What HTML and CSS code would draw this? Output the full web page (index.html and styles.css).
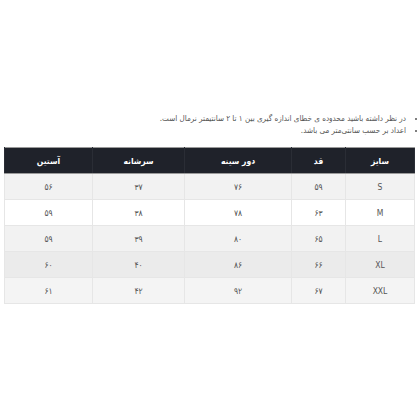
FILE: index.html
```html
<!DOCTYPE html>
<html lang="fa" dir="rtl">
<head>
<meta charset="utf-8">
<link rel="stylesheet" href="styles.css">
</head>
<body>
<div class="page">
  <ul class="notes">
    <li>در نظر داشته باشید محدوده ی خطای اندازه گیری بین ۱ تا ۲ سانتیمتر نرمال است.</li>
    <li>اعداد بر حسب سانتی‌متر می باشد.</li>
  </ul>
  <table class="sizes">
    <colgroup>
      <col class="c1"><col class="c2"><col class="c3"><col class="c4"><col class="c5">
    </colgroup>
    <thead>
      <tr><th>سایز</th><th>قد</th><th>دور سینه</th><th>سرشانه</th><th>آستین</th></tr>
    </thead>
    <tbody>
      <tr class="r1"><td>S</td><td>۵۹</td><td>۷۶</td><td>۳۷</td><td>۵۶</td></tr>
      <tr class="r2"><td>M</td><td>۶۳</td><td>۷۸</td><td>۳۸</td><td>۵۹</td></tr>
      <tr class="r3"><td>L</td><td>۶۵</td><td>۸۰</td><td>۳۹</td><td>۵۹</td></tr>
      <tr class="r4"><td>XL</td><td>۶۶</td><td>۸۶</td><td>۴۰</td><td>۶۰</td></tr>
      <tr class="r5"><td>XXL</td><td>۶۷</td><td>۹۲</td><td>۴۲</td><td>۶۱</td></tr>
    </tbody>
  </table>
</div>
</body>
</html>
```
FILE: styles.css
```css
html, body {
  margin: 0;
  padding: 0;
  background: #ffffff;
}
.page {
  padding: 113px 5px 0 5px;
  font-family: "DejaVu Sans Condensed", "DejaVu Sans", sans-serif;
  color: #555555;
}
.notes {
  margin: 0 0 10px 0;
  padding: 0 9px 0 0;
  font-size: 8px;
  line-height: 12px;
}
.sizes {
  width: 410px;
  border-collapse: collapse;
  table-layout: fixed;
  font-size: 8.5px;
}
.c1 { width: 69px; }
.c2 { width: 54px; }
.c3 { width: 107px; }
.c4 { width: 92px; }
.c5 { width: 88px; }
.sizes th {
  background: #1f222a;
  color: #ffffff;
  font-weight: bold;
  height: 25px;
  padding: 0;
  border: 1px solid #2a2d35;
  border-top: 1px solid #9a9a9a;
  border-bottom: 1px solid #9a9a9a;
  text-align: center;
}
.sizes td {
  height: 25px;
  padding: 0;
  text-align: center;
  border: 1px solid #e6e6e6;
  color: #555555;
}
.r1 { background: #f2f2f2; }
.r2 { background: #ffffff; }
.r3 { background: #f2f2f2; }
.r4 { background: #ebebeb; }
.r5 { background: #f4f4f4; }
```
